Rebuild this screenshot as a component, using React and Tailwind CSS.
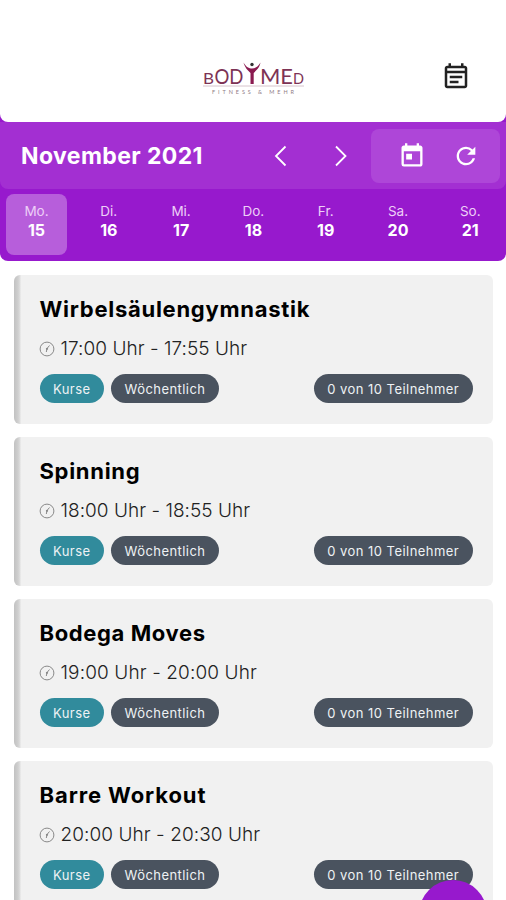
import React from 'react'
import { MdOutlineEventNote, MdToday, MdRefresh } from 'react-icons/md'

const days = [
    { name: 'Mo.', date: 15, active: true },
    { name: 'Di.', date: 16 },
    { name: 'Mi.', date: 17 },
    { name: 'Do.', date: 18 },
    { name: 'Fr.', date: 19 },
    { name: 'Sa.', date: 20 },
    { name: 'So.', date: 21 },
]

const courses = [
    { title: 'Wirbelsäulengymnastik', time: '17:00 Uhr - 17:55 Uhr', titleClass: 'tracking-[0.73px]', timeClass: 'tracking-[0.05px]' },
    { title: 'Spinning', time: '18:00 Uhr - 18:55 Uhr', titleClass: 'tracking-[0.7px]', timeClass: 'tracking-[0.03px]' },
    { title: 'Bodega Moves', time: '19:00 Uhr - 20:00 Uhr', titleClass: 'tracking-[0.62px]', timeClass: 'tracking-[0.12px]' },
    { title: 'Barre Workout', time: '20:00 Uhr - 20:30 Uhr', titleClass: 'tracking-[0.9px]', timeClass: 'tracking-[0.07px]' },
]

function Logo() {
    return (
        <svg width="104" height="36" viewBox="0 0 104 36" fontFamily="Lato, sans-serif" fill="#7d3355">
            <text x="1" y="24" fontSize="16" textLength="11" lengthAdjust="spacingAndGlyphs">B</text>
            <text x="12.5" y="24" fontSize="21.5" textLength="29" lengthAdjust="spacingAndGlyphs">OD</text>
            <circle cx="50" cy="4.5" r="1.7" fill="#333" />
            <path d="M41.500 2.500C44 7 47 8.500 50 8.500S56 7 58.500 2.500C57.500 8 54 10.500 51.700 13V24H48.500V13C46 10.500 43 8 41.500 2.500Z" fill="#8a1a50" />
            <text x="58" y="24" fontSize="21.5" textLength="33" lengthAdjust="spacingAndGlyphs">ME</text>
            <text x="91" y="24" fontSize="16" textLength="11" lengthAdjust="spacingAndGlyphs">D</text>
            <path d="M1 26H102" stroke="#cbb5bf" strokeWidth="0.8" />
            <text x="10" y="33.500" fontSize="5.500" fill="#907b85" textLength="82">FITNESS &amp; MEHR</text>
        </svg>
    )
}

function Chevron({ d }) {
    return (
        <svg width="14" height="22" viewBox="0 0 14 22" fill="none" stroke="white" strokeWidth="1.8">
            <path d={d} />
        </svg>
    )
}

function Clock() {
    return (
        <svg width="16" height="16" viewBox="0 0 16 16" fill="none" stroke="#7d7d7d" strokeWidth="0.9">
            <circle cx="8" cy="8" r="6.9" />
            <path d="M10.500 4.500L8 7.500L7.300 11" />
            <circle cx="8" cy="7.800" r="0.600" fill="#7d7d7d" />
        </svg>
    )
}

function CourseCard({ course }) {
    return (
        <div className="h-[149px] shrink-0 rounded-md bg-[linear-gradient(to_right,#c2c2c2_0px,#cfcfcf_4px,#dedede_6px,#f1f1f1_7px)] pl-[25.500px] pr-5 pt-[19px]">
            <h3 className={`h-[30px] whitespace-nowrap text-[22px] font-bold leading-[30px] text-black ${course.titleClass}`}>
                {course.title}
            </h3>
            <div className="mt-[11px] flex h-7 items-center gap-1.5 -ml-px">
                <Clock />
                <span className={`whitespace-nowrap text-[19px] font-light text-[#222] ${course.timeClass}`}>{course.time}</span>
            </div>
            <div className="mt-[11px] flex h-[29px] text-[13px] leading-[30px] text-[#eef2f4]">
                <span className="w-[64.500px] rounded-full bg-[#318b9c] text-center tracking-[0.45px]">Kurse</span>
                <span className="ml-[7px] w-[108px] rounded-full bg-[#4a535f] text-center tracking-[0.45px]">Wöchentlich</span>
                <span className="ml-auto w-[159.500px] rounded-full bg-[#4a535f] text-center tracking-[0.45px]">0 von 10 Teilnehmer</span>
            </div>
        </div>
    )
}

function App() {
    return (
        <div className="relative flex h-[900px] w-[506px] flex-col overflow-hidden bg-white font-['Inter',sans-serif]">
            <div className="shrink-0 rounded-b-lg bg-[#9719cd]">
                <div className="rounded-b-lg bg-[#a32fd2]">
                    <header className="bg-[#9719cd]">
                        <div className="bg-white h-[114px]" />
                        <div className="h-2 rounded-b-lg bg-white" />
                    </header>
                    <div className="flex h-[67px] items-center pl-[21px] pr-[6px]">
                        <h1 className="w-[253px] whitespace-nowrap pt-0.5 text-[23px] font-bold tracking-[0.4px] text-white">November 2021</h1>
                        <Chevron d="M11.500 1.500L2 11L11.500 20.500" />
                        <div className="ml-[46px]">
                            <Chevron d="M2 1.500L11.500 11L2 20.500" />
                        </div>
                        <div className="ml-auto flex h-[54px] w-[129px] items-center rounded-lg bg-[#ae46d8] pl-[27px] text-white">
                            <MdToday size={28} />
                            <MdRefresh size={28} className="ml-[26px]" />
                        </div>
                    </div>
                </div>
                <div className="flex h-[72px] gap-[11.300px] pl-[6px] pt-[5px]">
                    {days.map((day) => (
                        <div
                            key={day.date}
                            className={`flex h-[61px] w-[61px] shrink-0 flex-col items-center rounded-lg pt-2 text-white ${day.active ? 'bg-[#b75edb]' : ''}`}
                        >
                            <span className="text-[13.500px] leading-[19px] text-[#edcff7]">{day.name}</span>
                            <span className="text-base font-bold leading-[19px]">{day.date}</span>
                        </div>
                    ))}
                </div>
            </div>

            <div className="flex flex-col gap-[13px] pl-3.5 pr-[13px] pt-3.5">
                {courses.map((course) => (
                    <CourseCard key={course.title} course={course} />
                ))}
            </div>

            {/* logo and calendar button sit over the white top bar */}
            <div className="absolute left-[202px] top-[60px]">
                <Logo />
            </div>
            <MdOutlineEventNote size={30} className="absolute left-[441px] top-[62px] text-[#222]" />
            <button className="absolute left-[419px] top-[880px] h-[68px] w-[68px] rounded-full bg-[#9719cd]" />
        </div>
    )
}

export default App
